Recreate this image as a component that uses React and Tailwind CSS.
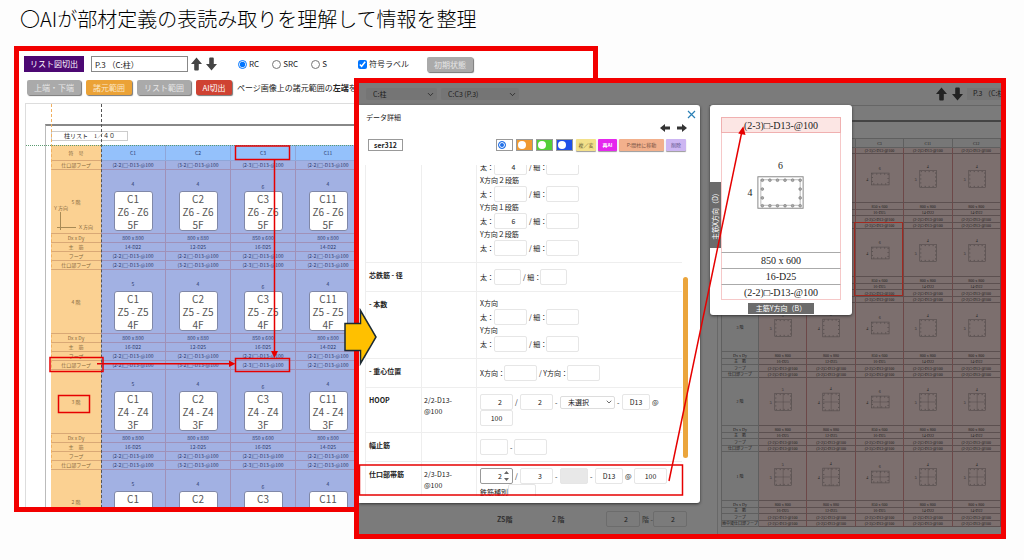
import React from 'react';
import { ChevronDown } from 'lucide-react';

const SPEC = {
  C1: { top: [4, 5, 5, 5], bars: ['14-D22', '16-D22', '16-D25', '16-D25'], size: '800 x 800', joint: '(2-2)□-D13-@100' },
  C2: { top: [4, 4, 4, 4], bars: ['12-D25', '12-D25', '12-D25', '12-D25'], size: '800 x 880', joint: '(3-2)□-D13-@100' },
  C3: { top: [6, 6, 6, 6], bars: ['16-D25', '16-D25', '16-D25', '16-D25'], size: '850 x 600', joint: '(2-3)□-D13-@100' },
  C11: { top: [4, 4, 4, 4], bars: ['14-D22', '14-D22', '14-D25', '14-D25'], size: '800 x 800', joint: '(2-2)□-D13-@100' },
};
const HOOP = '(2-2)□-D13-@100';

const ArrowIcon = ({ className = '' }) => (
  <svg viewBox="0 0 12 14" className={`w-[11px] h-[14px] shrink-0 ${className}`} fill="currentColor">
    <path d="M6 0 L12 7 H8.5 V13 Q8.5 14 7.5 14 H4.5 Q3.5 14 3.5 13 V7 H0 Z" />
  </svg>
);

/* ---------- list window ---------- */

const ToolButton = ({ children, className }) => (
  <button className={`h-[15px] rounded-[2px] text-[8px] leading-[15px] shadow-[1px_1px_1px_#777] ${className}`}>
    {children}
  </button>
);

const Radio = ({ label, checked }) => (
  <label className="flex items-center gap-[2px]">
    <input type="radio" name="kind" defaultChecked={checked} className="w-[9px] h-[9px]" />
    {label}
  </label>
);

const LIST_LABEL = 'h-[9px] p-0 border-b border-[#d9a875] bg-[#fbd192] text-[#86693f] font-normal';
const LIST_CELL = 'h-[9px] p-0 border-b border-r border-[#a091b8] bg-[#a2b1e3] text-[#2c3a6c]';

const ListRow = ({ label, values }) => (
  <tr>
    <th className={LIST_LABEL}>{label}</th>
    {values.map((v, i) => (
      <td key={i} className={LIST_CELL}>{v}</td>
    ))}
  </tr>
);

const ListFloor = ({ floor, index }) => {
  const cols = Object.entries(SPEC);
  return (
    <>
      <tr>
        <th className={`${LIST_LABEL} relative h-[64px]`}>
          {floor} 階
          {index === 0 && (
            <>
              <span className="absolute left-[2px] top-[34px]">Ｙ方向</span>
              <span className="absolute left-[27px] top-[53px]">Ｘ方向</span>
              <svg className="absolute left-[6px] top-[42px] w-[20px] h-[20px]" stroke="#a88a55" fill="none">
                <path d="M3.5 0 V18 M0 15.5 H19" />
              </svg>
            </>
          )}
        </th>
        {cols.map(([name, c]) => (
          <td key={name} className={`${LIST_CELL} align-top`}>
            <div className={`flex justify-center h-[11px] mt-[10px] ${name === 'C3' ? 'items-end' : 'items-start'}`}>
              {c.top[index]}
            </div>
            <div className="mx-auto w-[39px] h-[40px] rounded-[3px] border border-[#8088a8] bg-white text-[#555] text-[10px] leading-[13px]">
              <div>{name}</div>
              <div>Z{floor + 1} - Z{floor + 1}</div>
              <div>{floor}F</div>
            </div>
          </td>
        ))}
      </tr>
      {/* the lowest floor ends at the window edge */}
      {floor > 2 && (
        <>
          <ListRow label="Dx x Dy" values={cols.map(([, c]) => c.size)} />
          <ListRow label="主　筋" values={cols.map(([, c]) => c.bars[index])} />
          <ListRow label="フープ" values={cols.map(() => HOOP)} />
          <ListRow label="仕口部フープ" values={cols.map(([, c]) => c.joint)} />
        </>
      )}
    </>
  );
};

const ListWindow = () => (
  <section className="absolute isolate left-[14px] top-[46px] w-[57%] h-[466px] border-[5px] border-[#f20000] bg-white overflow-hidden text-[8px] text-[#222]">
    <div className="flex items-center pt-[5px] pl-[5px] h-[21px]">
      <button className="w-[60px] h-[16px] bg-[#4c0873] text-white">リスト図切出</button>
      <input aria-label="ページ" defaultValue="P.3 （C:柱）" className="ml-[7px] w-[97px] h-[16px] px-[3px] border border-[#888]" />
      <ArrowIcon className="ml-[3px] text-[#444]" />
      <ArrowIcon className="ml-[4px] text-[#444] rotate-180" />
      <div className="ml-[21px] flex items-center gap-[13px]">
        <Radio label="RC" checked />
        <Radio label="SRC" />
        <Radio label="S" />
      </div>
      <label className="ml-[31px] flex items-center gap-[2px]">
        <input type="checkbox" defaultChecked className="w-[9px] h-[9px]" />
        符号ラベル
      </label>
      <ToolButton className="ml-[18px] w-[46px] bg-[#aaaaaa] text-[#e6e6e6]">初期状態</ToolButton>
    </div>
    <div className="flex items-center gap-[5px] mt-[8px] pl-[8px] whitespace-nowrap">
      <ToolButton className="w-[54px] bg-[#aaaaaa] text-[#e6e6e6]">上端・下端</ToolButton>
      <ToolButton className="w-[46px] bg-[#eba236] text-[#fbe6c4]">諸元範囲</ToolButton>
      <ToolButton className="w-[54px] bg-[#aaaaaa] text-[#e6e6e6]">リスト範囲</ToolButton>
      <ToolButton className="w-[36px] bg-[#cf4232] text-white">AI切出</ToolButton>
      <p>ページ画像上の諸元範囲の<b>左端</b>を</p>
    </div>

    <div className="relative mt-[8px] ml-[6px] h-[405px] border-t border-l border-[#ddd]">
      <div className="absolute left-[25px] top-0 h-full border-l border-dashed border-l-[#f0b060]" />
      <div className="absolute left-[75px] top-0 z-10 h-full border-l border-dashed border-l-[#555]" />
      <div className="absolute left-0 top-[41px] z-10 w-full border-t border-dotted border-t-[#5a9a70]" />
      <div className="ml-[19px] pt-[20px]">
        <div className="border-t-2 border-l border-t-[#888] border-l-[#bbb] pl-[5px] pt-[5px]">
          <div className="w-[77px] h-[10px] border border-[#ccc] text-center text-[6px] leading-[8px] font-['Liberation_Serif','Noto_Sans_CJK_JP',serif]">柱リスト　1／４０</div>
          <table className="mt-[4px] w-[310px] table-fixed border-separate border-spacing-0 text-center text-[5px] leading-[8px]">
            <thead>
              <tr>
                <th className={`${LIST_LABEL} w-[50px] h-[16px]`}>符　号</th>
                {Object.keys(SPEC).map((name) => (
                  <th key={name} className="w-[65px] h-[16px] p-0 border-b border-r border-[#8fa6d8] bg-[#94c1fb] text-[#2c3a6c] font-normal">{name}</th>
                ))}
              </tr>
            </thead>
            <tbody>
              <ListRow label="仕口部フープ" values={Object.values(SPEC).map((c) => c.joint)} />
              {[5, 4, 3, 2].map((floor, i) => (
                <ListFloor key={floor} floor={floor} index={i} />
              ))}
            </tbody>
          </table>
        </div>
      </div>
    </div>
  </section>
);

/* ---------- detail window ---------- */

const Box = ({ name, value = '', className = 'w-[33px]', align = 'text-center' }) => (
  <input
    aria-label={name}
    defaultValue={value}
    className={`h-[16px] shrink-0 rounded-[2px] border border-[#e6e6e6] ${align} ${className}`}
  />
);

const Pair = ({ name, value, width = 'w-[33px]' }) => (
  <div className="flex items-center h-[16px]">
    <span className="w-[14px]">太：</span>
    <Box name={`${name} 太`} value={value} className={`${width} pl-[6px]`} />
    <span className="w-[19px] pl-[2px] whitespace-nowrap">/ 細：</span>
    <Box name={`${name} 細`} className={width} />
  </div>
);

const DetailRow = ({ label, code, children }) => (
  <tr className="align-top">
    <th className="w-[56px] pt-[7px] pl-[3px] pb-0 pr-0 text-left font-bold border-b border-r border-[#eee]">{label}</th>
    <td className="w-[55px] pt-[7px] pl-[2px] pb-0 pr-0 border-b border-r border-[#eee]">{code}</td>
    <td className="py-[6px] pl-[3px] pr-0 border-b border-[#eee]">{children}</td>
  </tr>
);

const CHIPS = ['bg-white', 'bg-[#f09a30]', 'bg-[#52cf38]', 'bg-[#1f50e8]'];

const DetailModal = () => (
  <div className="absolute left-0 top-[22px] w-[341px] h-[398px] rounded-r-[3px] bg-white text-[#222] shadow-[0_1px_3px_#333]">
    <button aria-label="閉じる" className="absolute right-[4px] top-[5px]">
      <svg className="w-[9px] h-[9px]" viewBox="0 0 9 9" stroke="#2a7fb5" strokeWidth="1.2"><path d="M1 1 L8 8 M8 1 L1 8" /></svg>
    </button>
    <h2 className="pt-[7px] pl-[7px]">データ詳細</h2>
    <div className="flex justify-end items-center gap-[7px] h-[10px] pr-[13px] text-[#333]">
      <svg className="w-[10px] h-[8px]" viewBox="0 0 10 8" fill="currentColor"><path d="M0 4 L5 0 V2.5 H10 V5.5 H5 V8 Z" /></svg>
      <svg className="w-[10px] h-[8px]" viewBox="0 0 10 8" fill="currentColor"><path d="M10 4 L5 0 V2.5 H0 V5.5 H5 V8 Z" /></svg>
    </div>
    <div className="flex mt-[6px] pl-[9px] pr-[14px] h-[12px] text-[5px]">
      <input aria-label="シリーズ" defaultValue="ser312" className="w-[35px] h-[12px] border border-[#999] text-center text-[7px] font-bold" />
      <div className="flex gap-[3px] ml-auto mr-[3px]">
        {CHIPS.map((c, i) => (
          <label key={c} className={`w-[17px] h-[12px] pl-px flex items-center border border-[#999] ${c}`}>
            <input type="radio" name="chip" aria-label={`色${i + 1}`} defaultChecked={i === 0} className="appearance-none shrink-0 w-[8px] h-[8px] rounded-full bg-white checked:border checked:border-[#1f6fe8] checked:bg-[#1f6fe8] checked:shadow-[inset_0_0_0_1px_#fff]" />
          </label>
        ))}
      </div>
      <div className="flex gap-[2px] leading-[12px] whitespace-nowrap">
        <button className="w-[20px] rounded-[1px] shadow-[0_1px_1px_#999] bg-[#f3e08a] text-[#6d6238]">複／変</button>
        <button className="w-[19px] rounded-[1px] shadow-[0_1px_1px_#999] bg-[#e528ee] text-white font-bold">再AI</button>
        <button className="w-[45px] rounded-[1px] shadow-[0_1px_1px_#999] bg-[#f2b08c] text-[#7a5546]">P:間柱に移動</button>
        <button className="w-[20px] rounded-[1px] shadow-[0_1px_1px_#999] bg-[#cdb6f2] text-[#62558a]">削除</button>
      </div>
    </div>

    <div className="mt-[14px] ml-[6px] w-[317px] h-[331px] overflow-hidden">
      <table className="-mt-[12px] w-full table-fixed border-separate border-spacing-0 border-l border-[#eee]">
        <tbody>
          <DetailRow>
            <Pair name="X方向1段筋" value="4" />
            <div>X方向２段筋</div>
            <Pair name="X方向2段筋" />
            <div>Y方向１段筋</div>
            <Pair name="Y方向1段筋" value="6" />
            <div>Y方向２段筋</div>
            <Pair name="Y方向2段筋" />
          </DetailRow>
          <DetailRow label="芯鉄筋 - 径">
            <Pair name="芯鉄筋 径" width="w-[27px]" />
          </DetailRow>
          <DetailRow label="- 本数">
            <div>X方向</div>
            <Pair name="本数 X方向" />
            <div>Y方向</div>
            <Pair name="本数 Y方向" />
          </DetailRow>
          <DetailRow label="- 重心位置">
            <div className="flex items-center">
              <span className="w-[24px] whitespace-nowrap">X方向：</span>
              <Box name="重心位置 X方向" />
              <span className="w-[30px] pl-[2px] whitespace-nowrap">/ Y方向：</span>
              <Box name="重心位置 Y方向" />
            </div>
          </DetailRow>
          <DetailRow label="HOOP" code={<>2/2-D13-<br />@100</>}>
            <div className="flex flex-wrap items-center gap-x-[2px]">
              <Box name="HOOP X" value="2" className="w-[33px] pl-[7px]" />
              <span className="w-[3px]">/</span>
              <Box name="HOOP Y" value="2" className="w-[33px] pl-[7px]" />
              <span className="w-[3px]">-</span>
              <span className="relative flex items-center">
                <select aria-label="HOOP 種別" className="appearance-none w-[55px] h-[13px] pl-[7px] rounded-[2px] border border-[#ddd] bg-white">
                  <option>未選択</option>
                </select>
                <ChevronDown className="absolute right-[2px] w-[8px] h-[8px] pointer-events-none" />
              </span>
              <span className="w-[3px]">-</span>
              <Box name="HOOP 径" value="D13" className="w-[28px]" />
              <span className="w-[7px]">@</span>
              <Box name="HOOP ピッチ" value="100" />
            </div>
          </DetailRow>
          <DetailRow label="幅止筋">
            <div className="flex items-center gap-[2px]">
              <Box name="幅止筋 径" className="w-[28px]" />
              <span>-</span>
              <Box name="幅止筋 ピッチ" />
            </div>
          </DetailRow>
          <DetailRow label="仕口部帯筋" code={<>2/3-D13-<br />@100</>}>
            <div className="flex items-center gap-x-[2px]">
              <span className="relative flex">
                <Box name="帯筋 X" value="2" className="w-[33px] pl-[7px] !border-[#999]" />
                <svg className="absolute right-[4px] top-[3px] w-[5px] h-[10px]" viewBox="0 0 5 10" fill="#666"><path d="M0 3 L2.5 0 L5 3 Z M0 7 L2.5 10 L5 7 Z" /></svg>
              </span>
              <span className="w-[3px]">/</span>
              <Box name="帯筋 Y" value="3" className="w-[33px] pl-[7px]" />
              <span className="w-[3px]">-</span>
              <Box name="帯筋 種別" className="w-[28px] bg-[#e8e8e8]" />
              <span className="w-[3px]">-</span>
              <Box name="帯筋 径" value="D13" className="w-[28px]" />
              <span className="w-[7px]">@</span>
              <Box name="帯筋 ピッチ" value="100" />
            </div>
            <div className="flex items-center">
              <span className="w-[28px]">鉄筋種別</span>
              <Box name="鉄筋種別" className="w-[28px]" />
            </div>
          </DetailRow>
        </tbody>
      </table>
    </div>
    <div className="absolute right-[12px] top-[172px] w-[5px] h-[181px] rounded-full bg-[#eba53c]" />
  </div>
);

const SectionPreview = () => (
  <div className="absolute left-[351px] top-[22px] w-[142px] h-[210px] rounded-[3px] bg-white text-[#222] shadow-[0_1px_3px_#333]">
    <div className="absolute left-0 top-[77px] w-[11px] h-[66px] flex items-center justify-center bg-[#6b6b6b] text-white [writing-mode:vertical-rl] [text-orientation:sideways] rotate-180 whitespace-nowrap">
      主筋X方向（D）
    </div>
    <div className="mx-[11px] pt-[12px] text-center text-[10px] leading-[15px] font-['Liberation_Serif','Noto_Sans_CJK_JP',serif]">
      <div className="h-[16px] border border-[#f0b0b0] bg-[#fce6e4]">(2-3)□-D13-@100</div>
      <svg viewBox="0 0 120 119" className="block w-full h-[119px] border-x border-[#f6c8c8]" fill="none" stroke="#888">
        <rect x="36.5" y="43.5" width="46" height="32" />
        <rect x="39.5" y="46.5" width="40" height="26" stroke="#bbb" />
        {[0, 1, 2, 3, 4, 5].map((i) => (
          <g key={i} fill="#aaa" stroke="#777" strokeWidth="0.6">
            <circle cx={41 + i * 7.7} cy="47" r="1.4" />
            <circle cx={41 + i * 7.7} cy="73" r="1.4" />
          </g>
        ))}
        {[56, 65].map((y) => (
          <g key={y} fill="#aaa" stroke="#777" strokeWidth="0.6">
            <circle cx="41" cy={y} r="1.4" />
            <circle cx="79.5" cy={y} r="1.4" />
          </g>
        ))}
        <text x="57" y="36" fontSize="10" fill="#222" stroke="none">6</text>
        <text x="26" y="63" fontSize="10" fill="#222" stroke="none">4</text>
      </svg>
      <div className="h-[16px] border-t border-x border-t-[#aaa] border-x-[#f6c8c8]">850 x 600</div>
      <div className="h-[16px] border-t border-x border-t-[#aaa] border-x-[#f6c8c8]">16-D25</div>
      <div className="h-[16px] border border-t-[#aaa] border-[#f6c8c8]">(2-2)□-D13-@100</div>
    </div>
    <div className="mx-auto mt-[3px] w-[66px] h-[11px] bg-[#6b6b6b] text-white text-center">主筋Y方向（B）</div>
  </div>
);

const SHEET_COLS = [
  { name: 'C1', w: 17, h: 17, top: 5, left: 5, size: '800 x 800', bars: '16-D25', joint: '(2-2)□-D13-@100' },
  { name: 'C2', w: 17, h: 18, top: 4, left: 4, size: '800 x 880', bars: '12-D25', joint: '(3-2)□-D13-@100' },
  { name: 'C3', w: 18, h: 12, top: 6, left: 4, size: '850 x 600', bars: '16-D25', joint: '(2-3)□-D13-@100' },
  { name: 'C11', w: 17, h: 17, top: 4, left: 5, size: '800 x 800', bars: '14-D22', joint: '(2-2)□-D13-@100' },
  { name: 'C12', w: 17, h: 17, top: 4, left: 5, size: '800 x 800', bars: '14-D22', joint: '(2-2)□-D13-@100' },
];
const SHEET_LABEL = 'p-0 border-b border-r border-[#5f5f5f] bg-[#777] font-normal';
const SHEET_CELL = 'p-0 border-b border-r border-b-[#5c5050] border-r-[#6d4848] bg-[#7c6f6e]';

const SheetRow = ({ label, values, h }) => (
  <tr>
    <th className={`${SHEET_LABEL} ${h}`}>{label}</th>
    {values.map((v, i) => (
      <td key={i} className={`${SHEET_CELL} ${h}`}>{v}</td>
    ))}
  </tr>
);

const ColumnSection = ({ col, cross }) => {
  const x = 24.5 - col.w / 2;
  const y = 24 - col.h / 2;
  return (
    <svg viewBox="0 0 48 47" className="block w-full h-[47px]" fill="none" stroke="#4a4343">
      <rect x={x} y={y} width={col.w} height={col.h} strokeWidth="0.5" />
      <rect x={x + 1} y={y + 1} width={col.w - 2} height={col.h - 2} strokeWidth="0.8" strokeDasharray="1 3" />
      {cross && <path strokeWidth="0.4" d={`M${x} 24 h${col.w} M24.5 ${y} v${col.h}`} />}
      <text x="23" y={y - 3} fontSize="4" fill="#222" stroke="none">{col.top}</text>
      <text x={x - 5} y="26" fontSize="4" fill="#222" stroke="none">{col.left}</text>
    </svg>
  );
};

const SheetFloor = ({ floor, index }) => (
  <>
    <tr>
      <th className={`${SHEET_LABEL} ${index % 2 ? 'h-[48px]' : 'h-[49px]'}`}>{floor} 階</th>
      {SHEET_COLS.map((col) => (
        <td key={col.name} className={SHEET_CELL}><ColumnSection col={col} cross={floor < 3} /></td>
      ))}
    </tr>
    <SheetRow h="h-[7px]" label="Dx x Dy" values={SHEET_COLS.map((c) => c.size)} />
    <SheetRow h="h-[6px]" label="主　筋" values={SHEET_COLS.map((c) => c.bars)} />
    <SheetRow h="h-[7px]" label="フープ" values={SHEET_COLS.map(() => HOOP)} />
    <SheetRow h="h-[6px]" label={floor === 1 ? '地中梁仕口部フープ' : '仕口部フープ'} values={SHEET_COLS.map((c) => c.joint)} />
  </>
);

const DimSelect = ({ label, value, className }) => (
  <span className={`relative flex items-center ${className}`}>
    <select aria-label={label} className="appearance-none w-full h-[12px] pl-[7px] rounded-[2px] bg-[#757575]">
      <option>{value}</option>
    </select>
    <ChevronDown className="absolute right-[2px] w-[9px] h-[9px] pointer-events-none" />
  </span>
);

const DetailWindow = () => (
  <section className="absolute left-[354px] right-[18px] top-[78px] h-[461px] flex flex-col border-[5px] border-[#f20000] bg-[#7b7b7b] overflow-hidden text-[7px] leading-[11px] text-[#1c1c1c]">
    <header className="flex items-center h-[22px] shrink-0 pl-[7px]">
      <DimSelect label="種類" value="C:柱" className="w-[71px]" />
      <DimSelect label="符号" value="C:C3 (P.3)" className="ml-[4px] w-[78px]" />
      <ArrowIcon className="ml-auto text-[#222]" />
      <ArrowIcon className="ml-[5px] text-[#222] rotate-180" />
      <div className="ml-[4px] w-[34px] h-[12px] pl-[6px] bg-[#757575] whitespace-nowrap overflow-hidden">P.3 （C:柱</div>
    </header>
    <div className="flex grow min-h-0">
      <div className="w-[350px] shrink-0 flex flex-col justify-end pb-[7px]">
        <div className="flex items-center pl-[138px]">
          <b className="w-[55px] text-[#333]">ZS階</b>
          <span className="w-[54px]">2 階</span>
          <input aria-label="開始階" defaultValue="2" className="w-[34px] h-[16px] pl-[6px] rounded-[2px] border border-[#6c6c6c] text-center" />
          <span className="w-[13px] pl-[2px] whitespace-nowrap text-[#333]">階 -</span>
          <input aria-label="終了階" defaultValue="2" className="w-[34px] h-[16px] pl-[6px] rounded-[2px] border border-[#6c6c6c] text-center" />
        </div>
      </div>
      <div className="grow min-w-0 pt-[14px] pl-[8px] border-t border-[#666]">
        <div className="relative h-full border-t-2 border-l border-t-[#444] border-l-[#686868] pt-[16px] pl-[3px]">
          <table className="w-full table-fixed border-separate border-spacing-0 border-t border-l border-[#5f5f5f] text-center text-[4px] leading-[5px] font-['Liberation_Serif','Noto_Sans_CJK_JP',serif] whitespace-nowrap">
            <thead>
              <tr>
                <th className={`${SHEET_LABEL} w-[37px] h-[9px]`}>符　号</th>
                {SHEET_COLS.map((c) => (
                  <th key={c.name} className={SHEET_LABEL}>{c.name}</th>
                ))}
              </tr>
            </thead>
            <tbody>
              <SheetRow h="h-[6px]" label="仕口部フープ" values={SHEET_COLS.map((c) => c.joint)} />
              {[5, 4, 3, 2, 1].map((floor, i) => (
                <SheetFloor key={floor} floor={floor} index={i} />
              ))}
            </tbody>
          </table>
          <div className="absolute right-[98px] top-[100px] w-[49px] h-[74px] border border-[#a02a20]" />
        </div>
      </div>
    </div>
    <DetailModal />
    <SectionPreview />
  </section>
);

/* red marks and arrows drawn over both windows */
const Annotations = () => (
  <svg viewBox="0 0 1024 560" className="absolute left-0 top-0 w-[1024px] h-[560px] pointer-events-none" fill="none" stroke="#e60000" strokeWidth="1.5">
    <rect x="235.5" y="146" width="54" height="13.5" />
    <rect x="235.5" y="358.5" width="54" height="13" />
    <rect x="50" y="357.5" width="53" height="14" />
    <rect x="58.5" y="395.5" width="31" height="17" />
    <path d="M274.5 160 V353 M97 363.7 H230" />
    <path d="M271 351 H278 L274.5 358 Z M229 360.5 V367 L235.5 363.7 Z" fill="#e60000" stroke="none" />
    <rect x="359.5" y="465" width="323" height="30" />
    <path d="M669 481 L742 131" />
    <path d="M739.5 133 L743 128 L744.5 134 Z" fill="#e60000" />
    <path d="M345 323.5 H360.5 V310.5 L376 337 L360.5 363.5 V350.5 H345 Z" fill="#ffc000" stroke="#1b2a33" />
  </svg>
);

export default function App() {
  return (
    <main className="relative min-h-[560px] overflow-hidden bg-[#fdfdfd] font-['Noto_Sans_CJK_JP',sans-serif]">
      <h1 className="pl-[20px] pt-[5px] text-[20px] leading-[28px] font-light text-black">
        〇AIが部材定義の表読み取りを理解して情報を整理
      </h1>
      <ListWindow />
      <DetailWindow />
      <Annotations />
    </main>
  );
}
